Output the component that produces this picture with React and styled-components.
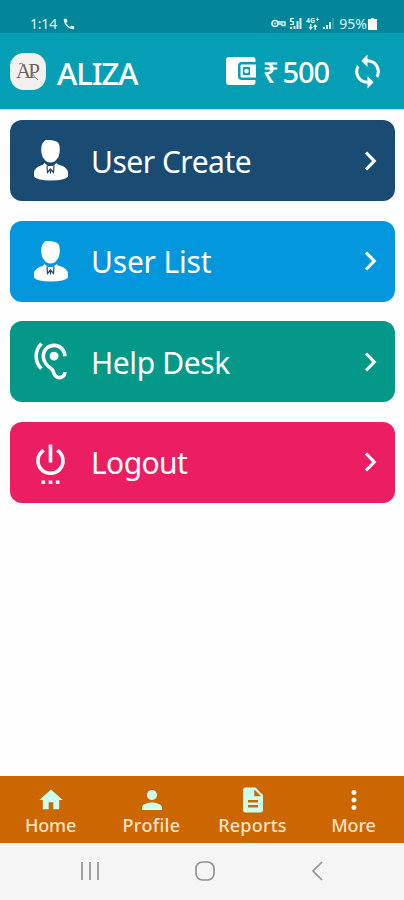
import React from "react";
import styled, { createGlobalStyle } from "styled-components";
import {
  MdCall,
  MdSync,
  MdHearing,
  MdSettingsPower,
  MdHome,
  MdPerson,
  MdDescription,
  MdMoreVert
} from "react-icons/md";

const GlobalStyle = createGlobalStyle`
  body {
    margin: 0;
    background: #fefefe;
    font-family: "Noto Sans", sans-serif;
  }
  * {
    box-sizing: border-box;
  }
  svg {
    display: block;
    flex-shrink: 0;
  }
`;
const Screen = styled.div`
  display: flex;
  flex-direction: column;
  width: 404px;
  height: 900px;
  overflow: hidden;
`;
const StatusBar = styled.div`
  display: flex;
  justify-content: space-between;
  align-items: center;
  height: 33px;
  padding: 14px 27px 0 30px;
  background: #038699;
  color: #d9f6f8;
`;
const StatusGroup = styled.div`
  display: flex;
  align-items: center;
  gap: ${props => props.$gap}px;
`;
const StatusText = styled.span`
  font-size: 14px;
  line-height: 18px;
  letter-spacing: ${props => props.$spacing}px;
`;
const Header = styled.header`
  display: flex;
  align-items: center;
  height: 77px;
  padding: 0 18px 0 10px;
  background: #049fb4;
  border-bottom: 1px solid #b5eef2;
  color: #ffffff;
`;
const Logo = styled.div`
  display: flex;
  align-items: center;
  justify-content: center;
  width: 36px;
  height: 37px;
  border-radius: 14px;
  background: #f3f1ef;
`;
const Title = styled.h1`
  margin: 3px auto 0 11px;
  font-size: 31px;
  font-weight: 500;
  line-height: 36px;
  letter-spacing: -1.1px;
`;
const Balance = styled.span`
  margin: 1px 20px 0 7px;
  font-size: 29px;
  font-weight: 500;
  line-height: 36px;
  letter-spacing: -1.1px;
  word-spacing: -2px;
`;
const Menu = styled.main`
  display: flex;
  flex-direction: column;
  flex: 1;
  gap: 19.5px;
  padding: 10px 9px 0 10px;
`;
const MenuItem = styled.button`
  display: flex;
  align-items: center;
  height: 81px;
  padding: 0 18px 0 19px;
  border: none;
  border-radius: 12px;
  background: ${props => props.$color};
  color: #ffffff;
  font-family: inherit;
  text-align: left;
  cursor: pointer;
`;
const MenuLabel = styled.span`
  flex: 1;
  margin-left: 19px;
  padding-top: 2px;
  font-size: 30px;
  line-height: 40px;
  letter-spacing: ${props => props.$spacing}px;
`;
const TabBar = styled.nav`
  display: grid;
  grid-template-columns: repeat(4, 1fr);
  height: 67px;
  background: #cc6600;
`;
const Tab = styled.a`
  display: flex;
  flex-direction: column;
  align-items: center;
  padding-top: 9px;
  color: ${props => props.$color};
`;
const TabIcon = styled.div`
  display: flex;
  align-items: center;
  height: 30px;
`;
const TabLabel = styled.span`
  margin-top: -1px;
  color: #f8e3c2;
  font-size: 18px;
  font-weight: 500;
  line-height: 22px;
  letter-spacing: ${props => props.$spacing}px;
`;
const SystemBar = styled.div`
  display: flex;
  justify-content: space-between;
  align-items: center;
  height: 57px;
  padding: 0 80px 1px 81px;
  background: #f5f5f5;
`;

const Monogram = () => (
  <svg width="30" height="30" viewBox="0 0 30 30">
    <text
      x="3"
      y="22"
      fontFamily="Liberation Serif, serif"
      fontSize="21"
      letterSpacing="-3"
      fill="#706262"
    >
      AP
    </text>
    <path d="M6 8q3-2 5 1M18 15q3 6 7 9" stroke="#9a7678" strokeWidth="1" fill="none" />
  </svg>
);

const Businessman = () => (
  <svg width="43" height="43" viewBox="0 0 43 43" fill="currentColor">
    <path d="M15 2.500q1-2 3-1.500 4-.5 8 1 4 1 4.500 5 .5 4 0 7-.5 4-3 6.500-2 3-6 3t-6-3q-2.500-2.500-3-6.500-.5-3 0-7 .500-3 2.500-4.500z" />
    <path d="M15.500 24l3.500 3h5l3.500-3q1 1.500 3 2 8.500 2 8.500 8.500v3q-3 4-17 4t-17-4v-3q0-6.500 8.500-8.500 1-.5 2-2z" />
    <path
      d="M18 26.500l.5 7 3-3.500 3 3.500.5-7M21.500 31.500v3"
      stroke="#25455f"
      strokeWidth="1.200"
      fill="none"
    />
  </svg>
);

const Wallet = () => (
  <svg width="30" height="28" viewBox="0 0 30 28" fill="currentColor">
    <path d="M3 0h23.500Q29.500 0 29.500 3v2H16q-4 0-4 4v10q0 4 4 4h13.500v2q0 3-3 3H3q-3 0-3-3V3q0-3 3-3z" />
    <path
      fillRule="evenodd"
      d="M15.500 7.500H30v13H15.500q-1 0-1-1V8.500q0-1 1-1zM17 10v8h9v-8z"
    />
    <circle cx="20.500" cy="14" r="2.300" />
    <path d="M24 10h2.500v8H24z" />
  </svg>
);

const Chevron = () => (
  <svg width="13" height="20" viewBox="0 0 13 20" stroke="currentColor" strokeWidth="3.200" fill="none">
    <path d="M2 1.500l8.200 8.500L2 18.500" />
  </svg>
);

const VpnKey = () => (
  <svg width="15" height="9" viewBox="0 0 15 9" stroke="currentColor" fill="none">
    <circle cx="4" cy="4.500" r="3" strokeWidth="1.500" />
    <circle cx="4" cy="4.500" r="0.700" />
    <path d="M7 3h7v3.500h-3V5H7" strokeWidth="1.400" />
  </svg>
);

const SignalBars = ({ dim }) => (
  <svg width="12" height="13" viewBox="0 0 12 13" fill="currentColor">
    {dim ? (
      <path d="M0 10h2v2H0zM3 8h2v4H3zM6 5h2v7H6z" />
    ) : (
      <path d="M0 1h4v1H1.500v2H4v4H0V7h2.500V5H0zM0 10h2v2H0zM3.500 9h2v3h-2zM6.500 4h2v8h-2zM9.500 1h2v11h-2z" />
    )}
    {dim && <path d="M9.500 1h1v11h-1z" opacity="0.4" />}
  </svg>
);

const Network = () => (
  <svg width="13" height="13" viewBox="0 0 13 13" fill="currentColor">
    <text x="0" y="6" fontFamily="Noto Sans, sans-serif" fontSize="7" fontWeight="700">
      4G
    </text>
    <path d="M10 2h3v1h-3zM11 1h1v3h-1zM4 7h1.500v3H7l-2.300 3L2.500 10H4zM8.500 13V10H7l2.200-3 2.300 3H10v3z" />
  </svg>
);

const Battery = () => (
  <svg width="9" height="12" viewBox="0 0 9 12" fill="#ffffff">
    <path d="M3 0h3v1h3v11H0V1h3z" />
  </svg>
);

const menu = [
  { label: "User Create", color: "#194b73", icon: <Businessman />, spacing: -0.5 },
  { label: "User List", color: "#0296dc", icon: <Businessman />, spacing: -0.2 },
  { label: "Help Desk", color: "#039887", icon: <MdHearing size={43} />, spacing: -0.4 },
  { label: "Logout", color: "#eb1e63", icon: <MdSettingsPower size={43} />, spacing: -0.6 }
];

const tabs = [
  { label: "Home", icon: MdHome, size: 28, color: "#ccffee", spacing: -0.2 },
  { label: "Profile", icon: MdPerson, size: 30, color: "#ccffee", spacing: 0.3 },
  { label: "Reports", icon: MdDescription, size: 30, color: "#ccffee", spacing: 0.2 },
  { label: "More", icon: MdMoreVert, size: 30, color: "#fff7ee", spacing: -0.1 }
];

export default function App() {
  return (
    <Screen>
      <GlobalStyle />
      <StatusBar>
        <StatusGroup $gap={5}>
          <StatusText $spacing={-0.2}>1:14</StatusText>
          <MdCall size={14} />
        </StatusGroup>
        <StatusGroup $gap={4}>
          <VpnKey />
          <SignalBars />
          <Network />
          <SignalBars dim />
          <StatusGroup $gap={1}>
            <StatusText $spacing={0}>95%</StatusText>
            <Battery />
          </StatusGroup>
        </StatusGroup>
      </StatusBar>
      <Header>
        <Logo>
          <Monogram />
        </Logo>
        <Title>ALIZA</Title>
        <Wallet />
        <Balance>₹ 500</Balance>
        <MdSync size={37} />
      </Header>
      <Menu>
        {menu.map(item => (
          <MenuItem key={item.label} $color={item.color}>
            {item.icon}
            <MenuLabel $spacing={item.spacing}>{item.label}</MenuLabel>
            <Chevron />
          </MenuItem>
        ))}
      </Menu>
      <TabBar>
        {tabs.map(({ label, icon: Icon, size, color, spacing }) => (
          <Tab key={label} $color={color}>
            <TabIcon>
              <Icon size={size} />
            </TabIcon>
            <TabLabel $spacing={spacing}>{label}</TabLabel>
          </Tab>
        ))}
      </TabBar>
      <SystemBar>
        <svg width="18" height="20" viewBox="1 0 18 20" stroke="#a2a2a2" strokeWidth="2">
          <path d="M2 1v18M10 1v18M18 1v18" />
        </svg>
        <svg width="22" height="22" viewBox="0 0 22 22" stroke="#939393" strokeWidth="1.700" fill="none">
          <rect x="2" y="2" width="18" height="18" rx="6.500" />
        </svg>
        <svg width="14" height="22" viewBox="0 0 14 22" stroke="#939393" strokeWidth="1.700" fill="none">
          <path d="M12 2L3 11l9 9" />
        </svg>
      </SystemBar>
    </Screen>
  );
}
